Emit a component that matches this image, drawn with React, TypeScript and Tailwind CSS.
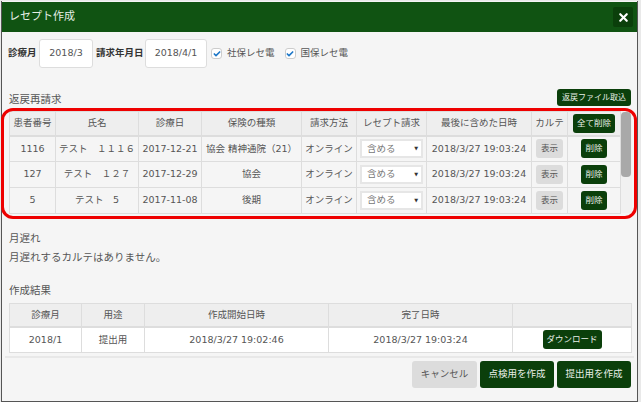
import { Check, X } from 'lucide-react';

const font = { fontFamily: '"DejaVu Sans", "Noto Sans CJK JP", sans-serif' };

const rows = [
  { id: '1116', name: 'テスト　１１１６', date: '2017-12-21', ins: '協会 精神通院（21）' },
  { id: '127', name: 'テスト　１２７', date: '2017-12-29', ins: '協会' },
  { id: '5', name: 'テスト　5', date: '2017-11-08', ins: '後期' },
];

const th = 'border border-[#dddddd] border-b-2 bg-[#eeeeee] font-normal p-0';
const td = 'border border-[#dddddd] p-0 text-center';

function GreenBtn({ children, className = '' }: { children: React.ReactNode; className?: string }) {
  return (
    <button className={`bg-[#0b3f0b] text-[#e8efe8] rounded-[3px] flex items-center justify-center whitespace-nowrap ${className}`}>
      {children}
    </button>
  );
}

function Box({ label }: { label: string }) {
  return (
    <label className="flex items-center gap-[5px] text-[9.5px] text-[#555]">
      <span className="w-[11px] h-[11px] bg-white border border-[#ccc] rounded-[3px] flex items-center justify-center">
        <Check size={8} strokeWidth={5} className="text-[#1f78c8]" />
      </span>
      {label}
    </label>
  );
}

export default function App() {
  return (
    <div className="relative w-[641px] h-[402px] overflow-hidden bg-[#e9e9e9]" style={font}>
      <div className="w-[637px] h-[401px] ml-px mt-px border border-[#555] border-t-0 bg-[#f5f5f5] flex flex-col text-[#555]">
        {/* header */}
        <div className="h-[30px] shrink-0 bg-[#105312] flex items-center justify-between pl-[7px] pr-[4px] mt-px">
          <span className="text-[11px] text-[#e6efe6]">レセプト作成</span>
          <button className="w-5 h-5 bg-[#0b3f0b] rounded-[2px] flex items-center justify-center">
            <X size={13} strokeWidth={4} className="text-white" />
          </button>
        </div>

        {/* form row */}
        <div className="flex items-center h-[29px] mt-[7px] pl-[6px] text-[9.5px]">
          <span className="font-bold text-[#333] w-[31px]">診療月</span>
          <div className="w-[54px] h-[29px] bg-white border border-[#ddd] rounded-[3px] flex items-center justify-center">2018/3</div>
          <span className="font-bold text-[#333] ml-[3px] w-[49px] whitespace-nowrap">請求年月日</span>
          <div className="w-[62px] h-[29px] bg-white border border-[#ddd] rounded-[3px] flex items-center justify-center">2018/4/1</div>
          <div className="ml-[4px]"><Box label="社保レセ電" /></div>
          <div className="ml-[10px]"><Box label="国保レセ電" /></div>
        </div>

        {/* 返戻再請求 */}
        <div className="flex items-end justify-between h-[19px] mt-[19px] pl-[7px] pr-[6px]">
          <span className="text-[10.5px] leading-[14px]">返戻再請求</span>
          <GreenBtn className="w-[74px] h-[17px] text-[8px]">返戻ファイル取込</GreenBtn>
        </div>

        <div className="flex mt-[5px] pl-[7px] h-[102px]">
          <table className="table-fixed border-collapse w-[611px] h-[102px] text-[9.5px]">
            <colgroup>
              <col className="w-[46px]" />
              <col className="w-[83px]" />
              <col className="w-[63px]" />
              <col className="w-[100px]" />
              <col className="w-[55px]" />
              <col className="w-[70px]" />
              <col className="w-[105px]" />
              <col className="w-[36px]" />
              <col className="w-[53px]" />
            </colgroup>
            <thead>
              <tr className="h-[24px]">
                <th className={th}>患者番号</th>
                <th className={th}>氏名</th>
                <th className={th}>診療日</th>
                <th className={th}>保険の種類</th>
                <th className={th}>請求方法</th>
                <th className={th}>レセプト請求</th>
                <th className={th}>最後に含めた日時</th>
                <th className={th}>カルテ</th>
                <th className={th}>
                  <GreenBtn className="w-[42px] h-[19px] mx-auto text-[8.5px]">全て削除</GreenBtn>
                </th>
              </tr>
            </thead>
            <tbody>
              {rows.map((r) => (
                <tr key={r.id} className="h-[26px]">
                  <td className={td}>{r.id}</td>
                  <td className={td}>{r.name}</td>
                  <td className={td}>{r.date}</td>
                  <td className={td}><span className="whitespace-nowrap">{r.ins}</span></td>
                  <td className={td}>オンライン</td>
                  <td className={td}>
                    <div className="mx-auto w-[63px] h-[19px] bg-white border-2 border-[#e6e6e6] flex items-center justify-between pl-[5px] pr-[3px]">
                      <span className="text-[9.5px] text-[#777]">含める</span>
                      <span className="text-[5px] text-[#333]">▼</span>
                    </div>
                  </td>
                  <td className={td}>2018/3/27 19:03:24</td>
                  <td className={td}>
                    <button className="mx-auto w-[27px] h-[19px] bg-[#dcdcdc] rounded-[3px] text-[8.5px] flex items-center justify-center">表示</button>
                  </td>
                  <td className={td}>
                    <GreenBtn className="mx-auto w-[26px] h-[19px] text-[8.5px]">削除</GreenBtn>
                  </td>
                </tr>
              ))}
            </tbody>
          </table>
          <div className="w-[11px] h-[102px] bg-[#f1f1f1]">
            <div className="w-[10px] h-[65px] mt-px bg-[#a9a9a9] rounded-[4px]" />
          </div>
        </div>

        {/* 月遅れ */}
        <div className="pl-[7px] mt-[18px] text-[10.5px] leading-[14px]">月遅れ</div>
        <div className="pl-[7px] mt-[5px] text-[10.5px] leading-[14px]">月遅れするカルテはありません。</div>

        {/* 作成結果 */}
        <div className="pl-[7px] mt-[19px] text-[10.5px] leading-[14px]">作成結果</div>
        <div className="pl-[7px] mt-[6px]">
          <table className="table-fixed border-collapse w-[622px] text-[9.5px]">
            <colgroup>
              <col className="w-[72px]" />
              <col className="w-[63px]" />
              <col className="w-[184px]" />
              <col className="w-[184px]" />
              <col className="w-[119px]" />
            </colgroup>
            <thead>
              <tr className="h-[23px]">
                <th className={th}>診療月</th>
                <th className={th}>用途</th>
                <th className={th}>作成開始日時</th>
                <th className={th}>完了日時</th>
                <th className={th}></th>
              </tr>
            </thead>
            <tbody>
              <tr className="h-[26px] bg-white">
                <td className={td}>2018/1</td>
                <td className={td}>提出用</td>
                <td className={td}>2018/3/27 19:02:46</td>
                <td className={td}>2018/3/27 19:03:24</td>
                <td className={td}>
                  <GreenBtn className="mx-auto w-[59px] h-[19px] text-[8.5px]">ダウンロード</GreenBtn>
                </td>
              </tr>
            </tbody>
          </table>
        </div>

        {/* footer */}
        <div className="mt-[3px] border-t-2 border-[#e8e8e8] mx-[3px]" />
        <div className="flex justify-end gap-[3px] pr-[6px] mt-[3px]">
          <button className="w-[65px] h-[27px] bg-[#dcdcdc] rounded-[3px] text-[9.5px] text-[#555]">キャンセル</button>
          <GreenBtn className="w-[74px] h-[27px] text-[9.5px]">点検用を作成</GreenBtn>
          <GreenBtn className="w-[74px] h-[27px] text-[9.5px]">提出用を作成</GreenBtn>
        </div>
      </div>

      {/* red annotation drawn over the screenshot */}
      <div className="absolute left-px top-[108px] w-[636px] h-[111px] border-[3px] border-[#ee0000] rounded-[12px] pointer-events-none" />
    </div>
  );
}
